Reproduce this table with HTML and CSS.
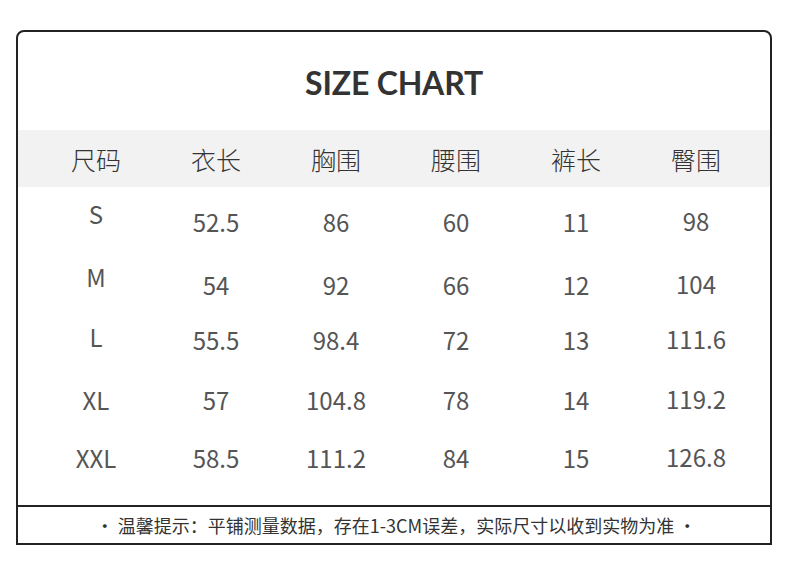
FILE: index.html
```html
<!DOCTYPE html>
<html lang="zh-CN">
<head>
<meta charset="utf-8">
<title>SIZE CHART</title>
<link rel="stylesheet" href="styles.css">
</head>
<body>
<div class="chart">
  <h1 class="title">SIZE CHART</h1>
  <div class="head">
    <div>尺码</div><div>衣长</div><div>胸围</div><div>腰围</div><div>裤长</div><div>臀围</div>
  </div>
  <div class="body">
    <div class="size up">S</div><div>52.5</div><div>86</div><div>60</div><div>11</div><div class="up1">98</div>
    <div class="size up">M</div><div>54</div><div>92</div><div>66</div><div>12</div><div class="up1">104</div>
    <div class="size up2">L</div><div>55.5</div><div>98.4</div><div>72</div><div>13</div><div class="up1">111.6</div>
    <div class="size">XL</div><div>57</div><div>104.8</div><div>78</div><div>14</div><div class="up1">119.2</div>
    <div class="size">XXL</div><div>58.5</div><div>111.2</div><div>84</div><div>15</div><div class="up1">126.8</div>
  </div>
  <div class="note">• 温馨提示：平铺测量数据，存在1-3CM误差，实际尺寸以收到实物为准 •</div>
</div>
</body>
</html>
```

FILE: styles.css
```css
html, body {
  margin: 0;
  padding: 0;
  background: #ffffff;
}

body {
  width: 790px;
  height: 570px;
  padding-top: 30px;
  box-sizing: border-box;
  font-family: "Noto Sans CJK SC", "Noto Sans", sans-serif;
}

.chart {
  margin-left: 16px;
  width: 756px;
  box-sizing: border-box;
  border: 2px solid #222222;
  border-radius: 8px 8px 0 0;
}

.title {
  margin: 0;
  height: 98px;
  display: flex;
  align-items: center;
  justify-content: center;
  padding-top: 2px;
  box-sizing: border-box;
  font-family: "Lato", "DejaVu Sans", sans-serif;
  font-weight: 700;
  font-size: 32px;
  letter-spacing: -0.2px;
  color: #333333;
}

.head {
  background: #f2f2f2;
  height: 57px;
  display: grid;
  grid-template-columns: repeat(6, 120px);
  padding-left: 18px;
  align-items: center;
  font-size: 25px;
  font-weight: 300;
  color: #333333;
}

.head div {
  text-align: center;
  line-height: 1;
  padding-top: 2px;
}

.body {
  display: grid;
  grid-template-columns: repeat(6, 120px);
  grid-template-rows: 70px 56px 54px 66px 50px;
  padding-left: 18px;
  padding-bottom: 22px;
  align-items: center;
  font-size: 24px;
  font-weight: 400;
  color: #555555;
}

.body div {
  text-align: center;
  line-height: 1;
}

.body .up {
  position: relative;
  top: -8px;
}

.body .up2 {
  position: relative;
  top: -3px;
}

.body .up1 {
  position: relative;
  top: -1px;
}

.note {
  border-top: 2px solid #222222;
  height: 36px;
  display: flex;
  align-items: center;
  justify-content: center;
  font-size: 18px;
  color: #333333;
  padding-left: 4px;
}
```
